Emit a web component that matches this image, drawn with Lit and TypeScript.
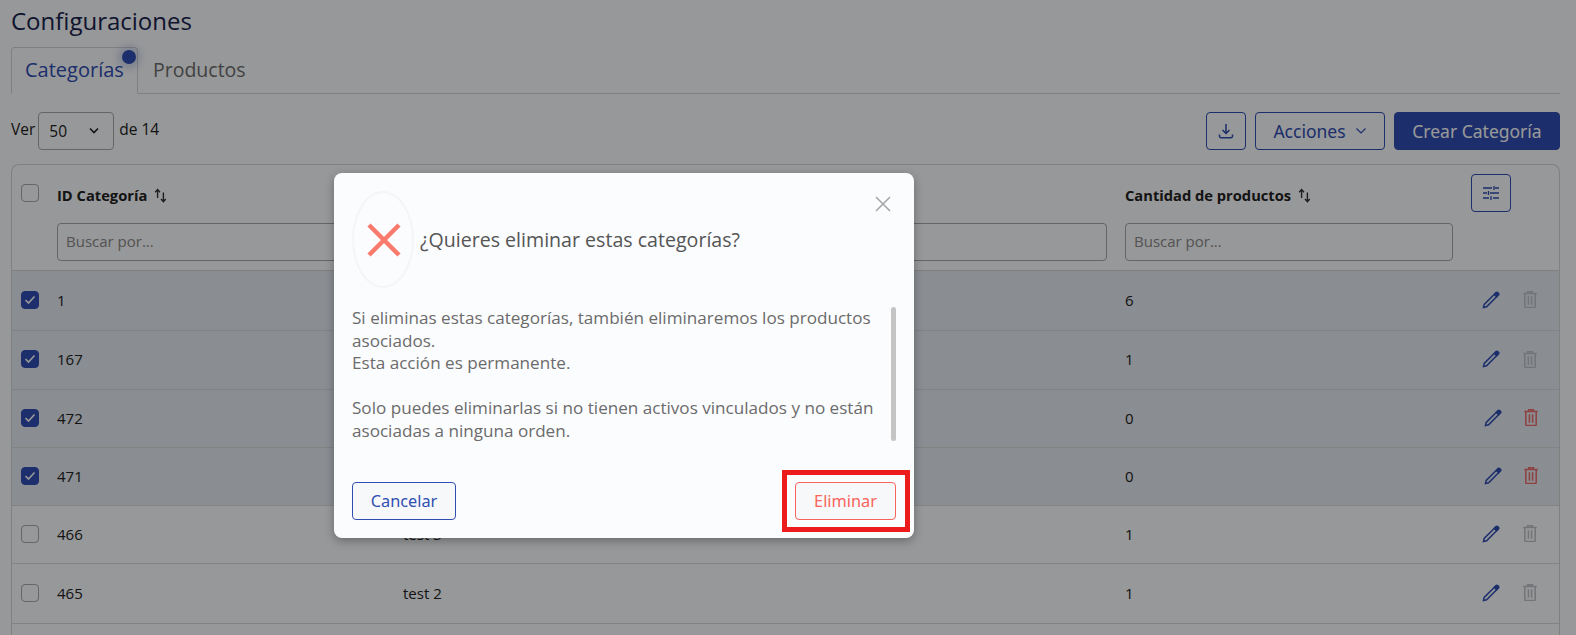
import { LitElement, html, css, svg } from 'lit';
import { customElement } from 'lit/decorators.js';

interface Row {
  id: string;
  name: string;
  qty: string;
  checked: boolean;
  canDelete: boolean;
  height: number;
}

// names of the first rows sit behind the dialog, so they are left out
const ROWS: Row[] = [
  { id: '1', name: '', qty: '6', checked: true, canDelete: false, height: 60 },
  { id: '167', name: '', qty: '1', checked: true, canDelete: false, height: 59 },
  { id: '472', name: '', qty: '0', checked: true, canDelete: true, height: 58 },
  { id: '471', name: '', qty: '0', checked: true, canDelete: true, height: 58 },
  { id: '466', name: 'test 3', qty: '1', checked: false, canDelete: false, height: 58 },
  { id: '465', name: 'test 2', qty: '1', checked: false, canDelete: false, height: 60 },
];

const sortIcon = svg`<svg class="sort" width="13" height="15" viewBox="0 0 13 15" fill="none" stroke="currentColor" stroke-width="1.4"><path d="M3.6 10V1.6M1.2 4.2 3.6 1.6 6 4.2M9.4 4.5v9M7 11l2.4 2.6 2.4-2.6"/></svg>`;
const pencilIcon = svg`<svg width="18" height="18" viewBox="0 0 18 18" fill="none" stroke="#2f4eb2" stroke-width="1.5"><path d="M1.5 16.5 2.2 13.4 12.4 3.2l2.4 2.4L4.6 15.8z"/><path d="M12.4 3.2 14 1.6c.5-.5 1.2-.5 1.7 0l.7.7c.5.5.5 1.2 0 1.7l-1.6 1.6z" fill="#2f4eb2"/></svg>`;
const trashIcon = svg`<svg width="14" height="17" viewBox="0 0 14 17" fill="none" stroke="currentColor" stroke-width="1.5"><path d="M.3 2.4h13.4M4.6 2.2V.8h4.8v1.4M1.8 2.6v13c0 .5.3.8.8.8h8.8c.5 0 .8-.3.8-.8v-13M5.4 5.2v8.6M8.6 5.2v8.6"/></svg>`;
const chevron = svg`<svg width="12" height="8" viewBox="0 0 12 8" fill="none" stroke="currentColor" stroke-width="1.6"><path d="m2 1.5 4 4 4-4"/></svg>`;
const thinChevron = svg`<svg width="12" height="8" viewBox="0 0 12 8" fill="none" stroke="currentColor" stroke-width="1.2"><path d="m1.5 1.5 4.5 4.5 4.5-4.5"/></svg>`;

@customElement('app-root')
export class AppRoot extends LitElement {
  static styles = css`
    :host {
      display: block;
      height: 635px;
      overflow: hidden;
      position: relative;
      background: #fcfdff;
      font-family: 'Open Sans', 'Noto Sans', sans-serif;
      color: #222;
      font-size: 15px;
    }
    .page {
      padding: 4px 16px 0 11px;
    }
    h1 {
      margin: 0;
      font-size: 24px;
      font-weight: 400;
      line-height: 34px;
      color: #19244f;
    }
    .tabs {
      display: flex;
      margin-top: 9px;
      height: 47px;
      border-bottom: 1px solid #d5d6d8;
      box-sizing: border-box;
    }
    .tab {
      position: relative;
      display: flex;
      align-items: center;
      font-size: 19.5px;
      padding: 0 14px 2px 15px;
      color: #6d6d6d;
      box-sizing: border-box;
    }
    .tab.active {
      color: #2f4eb2;
      font-size: 20px;
      border: 1px solid #d5d6d8;
      border-bottom: 1px solid #fcfdff;
      height: 47px;
      padding: 0 0 2px 13px;
      border-radius: 4px 4px 0 0;
      width: 127px;
    }
    .dot {
      position: absolute;
      top: 2px;
      right: 1px;
      width: 14px;
      height: 14px;
      border-radius: 50%;
      background: #2f4eb2;
      box-shadow: 0 0 6px 5px rgba(47, 78, 178, 0.18);
    }
    .toolbar {
      display: flex;
      align-items: center;
      margin-top: 18px;
      height: 38px;
    }
    .toolbar-label {
      padding-bottom: 4px;
      font-size: 15.5px;
    }
    .select {
      display: flex;
      align-items: center;
      justify-content: space-between;
      width: 76px;
      height: 38px;
      box-sizing: border-box;
      margin: 0 5px 0 3px;
      padding: 0 13px 0 10px;
      border: 1px solid #a9a9a9;
      border-radius: 4px;
      font-size: 15.5px;
    }
    .spacer {
      flex: 1;
    }
    .btn {
      display: flex;
      align-items: center;
      justify-content: center;
      box-sizing: border-box;
      height: 38px;
      border-radius: 4px;
      border: 1px solid #2f4eb2;
      color: #2f4eb2;
      font-family: 'Noto Sans', sans-serif;
      font-size: 16px;
    }
    .btn.icon {
      width: 40px;
    }
    .btn.actions {
      width: 130px;
      margin-left: 9px;
      gap: 9px;
      font-size: 17.5px;
    }
    .btn.primary {
      width: 166px;
      margin-left: 9px;
      background: #2f4eb2;
      color: #fff;
      font-size: 17.5px;
    }
    .table {
      margin-top: 14px;
      border: 1px solid #d5d6d8;
      border-radius: 8px 8px 0 0;
      border-bottom: none;
    }
    .head,
    .row {
      display: grid;
      grid-template-columns: 45px 346px 722px 346px 1fr;
    }
    .head {
      grid-template-rows: 58px 47px;
      border-bottom: 1px solid #d5d6d8;
    }
    .head .check-cell {
      padding: 19px 0 0 9px;
    }
    .title-cell {
      display: flex;
      align-items: center;
      gap: 7px;
      padding-top: 2px;
      font-size: 14.7px;
      font-weight: 700;
    }
    .sort {
      color: #333;
    }
    .filter-cell {
      padding-top: 9px;
    }
    .filter-btn {
      width: 42px;
    }
    .input {
      display: flex;
      align-items: center;
      box-sizing: border-box;
      height: 38px;
      margin-right: 18px;
      padding: 0 0 2px 8px;
      border: 1px solid #a9a9a9;
      border-radius: 4px;
      color: #8a8a8a;
      font-size: 15px;
    }
    .row {
      align-items: center;
      padding-bottom: 2px;
      border-bottom: 1px solid #d9dadb;
      box-sizing: border-box;
    }
    .row.selected {
      background: #e6ebf3;
    }
    .row .check-cell {
      padding-left: 9px;
      display: flex;
    }
    .box {
      display: flex;
      align-items: center;
      justify-content: center;
      width: 18px;
      height: 18px;
      box-sizing: border-box;
      border: 1px solid #aaa;
      border-radius: 4px;
    }
    .box.on {
      background: #2f4eb2;
      border-color: #2f4eb2;
    }
    .row-actions {
      display: flex;
      align-items: center;
      gap: 23px;
      padding-left: 11px;
      color: #bfc2c6;
    }
    .row-actions.danger {
      gap: 22px;
      padding-left: 13px;
      color: #ee6b6b;
    }
    .overlay {
      position: absolute;
      inset: 0;
      background: rgba(0, 0, 0, 0.4);
    }
    .modal {
      position: absolute;
      left: 334px;
      top: 173px;
      width: 580px;
      height: 365px;
      box-sizing: border-box;
      padding: 18px 18px 0;
      border-radius: 8px;
      background: #fbfcfe;
      box-shadow: 0 3px 10px rgba(0, 0, 0, 0.3);
      display: flex;
      flex-direction: column;
    }
    .close {
      position: absolute;
      right: 23px;
      top: 23px;
      display: flex;
      color: #a2a4a6;
    }
    .modal-head {
      display: flex;
      align-items: center;
      gap: 6px;
    }
    .ring {
      display: flex;
      align-items: center;
      justify-content: center;
      width: 62px;
      height: 97px;
      box-sizing: border-box;
      padding-left: 1px;
      border: 2px solid #f4f5f7;
      border-radius: 50%;
    }
    .modal-title {
      font-size: 19.6px;
      font-weight: 500;
      color: #555;
    }
    .modal-body {
      display: flex;
      justify-content: space-between;
      margin-top: 19px;
      height: 134px;
      font-size: 17.1px;
      line-height: 22.5px;
      color: #6b6b6b;
    }
    .scrollbar {
      width: 5px;
      flex: none;
      border-radius: 3px;
      background: #c4c4c4;
    }
    .modal-foot {
      display: flex;
      justify-content: space-between;
      margin-top: 41px;
    }
    .modal-foot .btn {
      background: #f7f8fa;
      width: 104px;
      font-size: 16.3px;
    }
    .modal-foot .btn.danger {
      width: 101px;
      color: #f8645a;
      border-color: #f8645a;
    }
    .mark {
      position: absolute;
      left: 448px;
      top: 297px;
      width: 128px;
      height: 62px;
      box-sizing: border-box;
      border: 5px solid #ed1c1c;
    }
  `;

  private _box(on: boolean) {
    return html`<span class="box ${on ? 'on' : ''}">
      ${on
        ? svg`<svg width="12" height="10" viewBox="0 0 12 10" fill="none" stroke="#fff" stroke-width="1.6"><path d="m1.5 5 3 3 6-6.5"/></svg>`
        : ''}
    </span>`;
  }

  private _row(r: Row) {
    return html`
      <div class="row ${r.checked ? 'selected' : ''}" style="height:${r.height}px">
        <div class="check-cell">${this._box(r.checked)}</div>
        <div>${r.id}</div>
        <div>${r.name}</div>
        <div>${r.qty}</div>
        <div class="row-actions ${r.canDelete ? 'danger' : ''}">${pencilIcon}${trashIcon}</div>
      </div>
    `;
  }

  render() {
    return html`
      <div class="page">
        <h1>Configuraciones</h1>
        <div class="tabs">
          <div class="tab active">Categorías<span class="dot"></span></div>
          <div class="tab">Productos</div>
        </div>
        <div class="toolbar">
          <span class="toolbar-label">Ver</span>
          <div class="select"><span>50</span>${chevron}</div>
          <span class="toolbar-label">de 14</span>
          <div class="spacer"></div>
          <div class="btn icon">
            <svg width="18" height="18" viewBox="0 0 18 18" fill="none" stroke="currentColor" stroke-width="1.5"><path d="M9 2v9M5.5 8 9 11.5 12.5 8M2.5 12.5v1.8c0 .8.6 1.4 1.4 1.4h10.2c.8 0 1.4-.6 1.4-1.4v-1.8"/></svg>
          </div>
          <div class="btn actions">Acciones ${thinChevron}</div>
          <div class="btn primary">Crear Categoría</div>
        </div>
        <div class="table">
          <div class="head">
            <div class="check-cell">${this._box(false)}</div>
            <div class="title-cell">ID Categoría ${sortIcon}</div>
            <div></div>
            <div class="title-cell">Cantidad de productos ${sortIcon}</div>
            <div class="filter-cell">
              <div class="btn icon filter-btn">
                <svg width="18" height="16" viewBox="0 0 18 16" fill="none" stroke="currentColor" stroke-width="1.3"><path d="M1 3h9M13 3h4M12 1v4M1 8h4M8 8h9M6.5 6v4M1 13h6M11 13h6M9 11v4"/></svg>
              </div>
            </div>
            <div></div>
            <div class="input">Buscar por...</div>
            <div class="input"></div>
            <div class="input">Buscar por...</div>
            <div></div>
          </div>
          ${ROWS.map((r) => this._row(r))}
          <div class="row" style="height:58px"></div>
        </div>
      </div>
      <div class="overlay"></div>
      <div class="modal">
        <div class="close">
          <svg width="16" height="16" viewBox="0 0 16 16" fill="none" stroke="currentColor" stroke-width="1.5"><path d="m1 1 14 14M15 1 1 15"/></svg>
        </div>
        <div class="modal-head">
          <div class="ring">
            <svg width="34" height="34" viewBox="0 0 34 34" fill="none" stroke="#fb7a6e" stroke-width="4.5"><path d="m2 2 30 30M32 2 2 32"/></svg>
          </div>
          <div class="modal-title">¿Quieres eliminar estas categorías?</div>
        </div>
        <div class="modal-body">
          <div>
            Si eliminas estas categorías, también eliminaremos los productos<br />
            asociados.<br />
            Esta acción es permanente.<br /><br />
            Solo puedes eliminarlas si no tienen activos vinculados y no están<br />
            asociadas a ninguna orden.
          </div>
          <div class="scrollbar"></div>
        </div>
        <div class="modal-foot">
          <div class="btn">Cancelar</div>
          <div class="btn danger">Eliminar</div>
        </div>
        <div class="mark"></div>
      </div>
    `;
  }
}
